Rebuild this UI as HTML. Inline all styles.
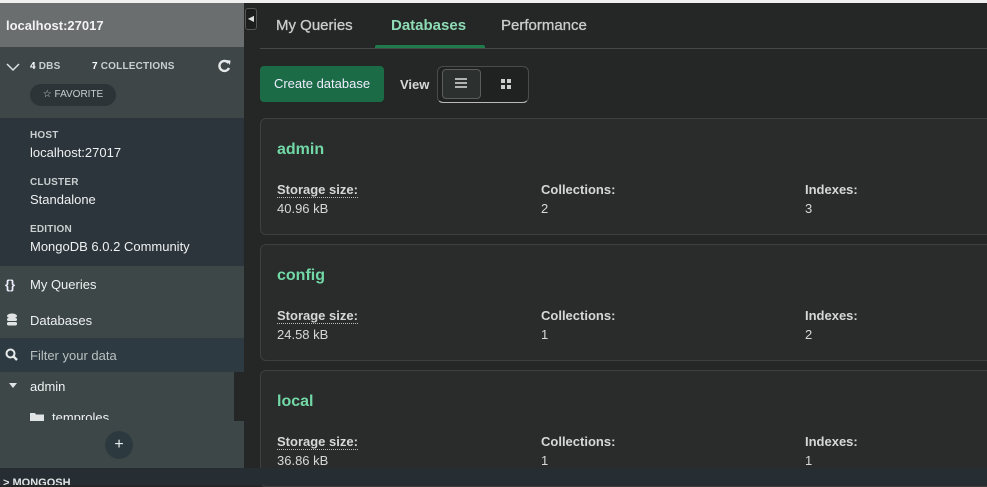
<!DOCTYPE html>
<html><head><style>
*{box-sizing:border-box;margin:0;padding:0}
body{width:987px;height:485px;overflow:hidden;background:#252726;font-family:"Liberation Sans",sans-serif;position:relative;color:#e8eded}
.a{position:absolute}
.lbl{font-size:10px;font-weight:bold;color:#c9cfcf;letter-spacing:.2px}
.val{font-size:13px;color:#eef1f1}
.card{position:absolute;left:260px;width:740px;height:117px;background:#2a2c2b;border:1px solid #3e403f;border-radius:6px}
.card h3{position:absolute;left:16px;top:22px;font-size:16px;color:#71d8a6;font-weight:bold}
.k{position:absolute;top:63px;font-size:13px;font-weight:bold;color:#d4d8d6}
.v{position:absolute;top:82px;font-size:13px;color:#d4d8d6}
.dot{border-bottom:1px dotted #bbb}
</style></head><body>
<div class="a" style="left:0;top:0;width:987px;height:3px;background:#f0f0f0"></div>
<div class="a" style="left:0;top:3px;width:244px;height:44px;background:#6b6e6e"></div>
<div class="a" style="left:6px;top:18px;font-size:13px;font-weight:bold;color:#f2f2f2">localhost:27017</div>
<div class="a" style="left:0;top:47px;width:244px;height:71px;background:#3e4647"></div>
<svg class="a" style="left:6px;top:62px" width="14" height="10"><path d="M1 2 L7 8 L13 2" stroke="#dfe3e3" stroke-width="1.5" fill="none"/></svg>
<div class="a lbl" style="left:30px;top:61px"><b style="color:#fff">4</b> DBS</div>
<div class="a lbl" style="left:92px;top:61px"><b style="color:#fff">7</b> COLLECTIONS</div>
<svg class="a" style="left:218px;top:59px" width="14" height="14"><path d="M10.5 4 A5 5 0 1 0 11 9" stroke="#e6e9e9" stroke-width="2.4" fill="none"/><path d="M8 1 L12.5 1.5 L12 6 Z" fill="#e6e9e9"/></svg>
<div class="a" style="left:30px;top:84px;width:86px;height:22px;border-radius:11px;background:#2c3437;font-size:10px;color:#c9cfcf;text-align:center;line-height:22px">☆ FAVORITE</div>
<div class="a" style="left:0;top:118px;width:244px;height:148px;background:#2c353b"></div>
<div class="a lbl" style="left:30px;top:130px">HOST</div>
<div class="a val" style="left:30px;top:145px">localhost:27017</div>
<div class="a lbl" style="left:30px;top:177px">CLUSTER</div>
<div class="a val" style="left:30px;top:192px">Standalone</div>
<div class="a lbl" style="left:30px;top:224px">EDITION</div>
<div class="a val" style="left:30px;top:239px">MongoDB 6.0.2 Community</div>
<div class="a" style="left:0;top:266px;width:244px;height:72px;background:#3d4748"></div>
<div class="a" style="left:5px;top:277px;font-size:13px;font-weight:bold;color:#eef">{}</div>
<div class="a val" style="left:30px;top:277px">My Queries</div>
<svg class="a" style="left:6px;top:313px" width="12" height="14"><ellipse cx="6" cy="3" rx="5" ry="2.5" fill="#dfe3e3"/><rect x="1" y="5" width="10" height="3" rx="1.5" fill="#dfe3e3"/><rect x="1" y="9" width="10" height="3.5" rx="1.5" fill="#dfe3e3"/></svg>
<div class="a val" style="left:30px;top:313px">Databases</div>
<div class="a" style="left:0;top:338px;width:244px;height:34px;background:#2d3a41"></div>
<svg class="a" style="left:5px;top:348px" width="14" height="14"><circle cx="5.5" cy="5.5" r="4" stroke="#e6eaea" stroke-width="2" fill="none"/><path d="M8.5 8.5 L12 12" stroke="#e6eaea" stroke-width="2.4"/></svg>
<div class="a" style="left:30px;top:348px;font-size:13px;color:#b8c0c0">Filter your data</div>
<div class="a" style="left:0;top:372px;width:244px;height:96px;background:#3d4748"></div>
<div class="a" style="left:234px;top:372px;width:10px;height:49px;background:#252726"></div>
<svg class="a" style="left:9px;top:383px" width="8" height="6"><path d="M0 0 L8 0 L4 5 Z" fill="#dfe3e3"/></svg>
<div class="a val" style="left:30px;top:379px">admin</div>
<div class="a" style="left:0;top:420px;width:234px;height:48px;background:#3d4748"></div>
<svg class="a" style="left:30px;top:413px" width="14" height="8"><path d="M0 0 H5 L6 1.5 H14 V8 H0 Z" fill="#dfe3e3"/></svg>
<div class="a" style="left:52px;top:410px;font-size:13px;color:#eef1f1;height:10px;overflow:hidden">temproles</div>
<div class="a" style="left:105px;top:431px;width:28px;height:28px;border-radius:14px;background:#2c3a40;color:#e8eded;text-align:center;line-height:27px;font-size:16px">+</div>
<div class="a" style="left:244px;top:3px;width:743px;height:45px;background:#252726"></div>
<div class="a" style="left:245px;top:8px;width:12px;height:22px;border:1px solid #555;border-radius:3px;background:#1c1e1d;color:#ddd;font-size:8px;text-align:center;line-height:20px">◀</div>
<div class="a" style="left:276px;top:17px;font-size:15px;color:#c9cdcb;-webkit-text-stroke:0.3px #c9cdcb">My Queries</div>
<div class="a" style="left:391px;top:17px;font-size:15px;font-weight:bold;color:#8ddcb6">Databases</div>
<div class="a" style="left:375px;top:45px;width:110px;height:4px;background:#1f7a4c;border-radius:2px 2px 0 0"></div>
<div class="a" style="left:501px;top:17px;font-size:15px;color:#c9cdcb;-webkit-text-stroke:0.3px #c9cdcb">Performance</div>
<div class="a" style="left:260px;top:48px;width:727px;height:1px;background:#464847"></div>
<div class="a" style="left:260px;top:66px;width:124px;height:36px;background:#1c6b47;border-radius:4px;font-size:13px;color:#eef;line-height:35px;text-align:center">Create database</div>
<div class="a" style="left:400px;top:77px;font-size:13px;font-weight:bold;color:#d4d8d6">View</div>
<div class="a" style="left:437px;top:66px;width:92px;height:37px;border:1px solid #4a4c4b;border-bottom-color:#bbb;border-radius:6px;background:#1f2221"></div>
<div class="a" style="left:442px;top:69px;width:39px;height:30px;border:1px solid #5a5d5c;border-radius:4px;background:#2c302f"></div>
<svg class="a" style="left:455px;top:78px" width="12" height="10"><path d="M0 1 H12 M0 5 H12 M0 9 H12" stroke="#ddd" stroke-width="1.6"/></svg>
<svg class="a" style="left:501px;top:79px" width="10" height="10"><rect x="0" y="0" width="4" height="4" fill="#ccc"/><rect x="6" y="0" width="4" height="4" fill="#ccc"/><rect x="0" y="6" width="4" height="4" fill="#ccc"/><rect x="6" y="6" width="4" height="4" fill="#ccc"/></svg>
<div class="card" style="top:118px"><h3>admin</h3>
<div class="k dot" style="left:16px">Storage size:</div><div class="v" style="left:16px">40.96 kB</div>
<div class="k" style="left:280px">Collections:</div><div class="v" style="left:280px">2</div>
<div class="k" style="left:544px">Indexes:</div><div class="v" style="left:544px">3</div></div>
<div class="card" style="top:244px"><h3>config</h3>
<div class="k dot" style="left:16px">Storage size:</div><div class="v" style="left:16px">24.58 kB</div>
<div class="k" style="left:280px">Collections:</div><div class="v" style="left:280px">1</div>
<div class="k" style="left:544px">Indexes:</div><div class="v" style="left:544px">2</div></div>
<div class="card" style="top:370px"><h3>local</h3>
<div class="k dot" style="left:16px">Storage size:</div><div class="v" style="left:16px">36.86 kB</div>
<div class="k" style="left:280px">Collections:</div><div class="v" style="left:280px">1</div>
<div class="k" style="left:544px">Indexes:</div><div class="v" style="left:544px">1</div></div>
<div class="a" style="left:0;top:468px;width:987px;height:17px;background:#262e34;overflow:hidden"><div style="position:absolute;left:3px;top:9px;font-size:11px;font-weight:bold;color:#dfe3e3">&gt; MONGOSH</div></div>
</body></html>
